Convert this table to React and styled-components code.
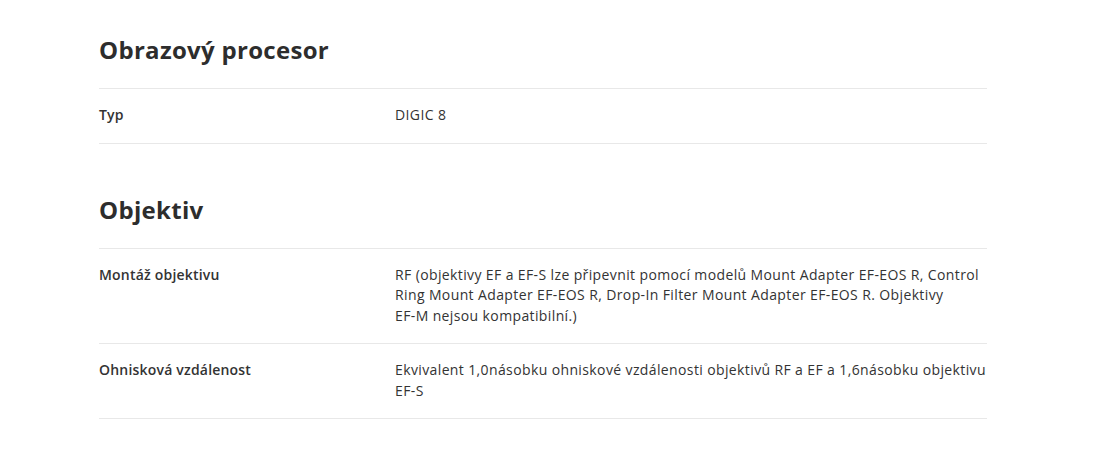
import styled, { createGlobalStyle } from "styled-components";

const Global = createGlobalStyle`
  body {
    margin: 0;
    background: #ffffff;
    font-family: "Open Sans", "Liberation Sans", sans-serif;
    color: #333333;
  }
`;

const Page = styled.div`
  width: 888px;
  margin-left: 99px;
  padding-top: 35px;
`;

const Section = styled.section`
  margin-bottom: 51px;
`;

const Heading = styled.h2`
  margin: 0 0 23px 0;
  font-size: 24px;
  line-height: 30px;
  font-weight: 700;
  letter-spacing: 0.3px;
  color: #2d2d2d;
`;

const Table = styled.div`
  border-top: 1px solid #e8e8e8;
`;

const Row = styled.div`
  display: grid;
  grid-template-columns: 296px 1fr;
  padding: 16px 0 17px;
  border-bottom: 1px solid #e8e8e8;
  font-size: 14px;
  line-height: 20.5px;
`;

const Label = styled.div`
  font-weight: 600;
  letter-spacing: 0.2px;
  color: #333333;
`;

const Value = styled.div`
  font-weight: 400;
  letter-spacing: 0.38px;
  color: #333333;
`;

const Line = styled.span`
  display: block;
  white-space: nowrap;
`;

// lines kept as in the source page
const sections = [
  {
    title: "Obrazový procesor",
    rows: [["Typ", ["DIGIC 8"]]],
  },
  {
    title: "Objektiv",
    rows: [
      [
        "Montáž objektivu",
        [
          "RF (objektivy EF a EF-S lze připevnit pomocí modelů Mount Adapter EF-EOS R, Control",
          "Ring Mount Adapter EF-EOS R, Drop-In Filter Mount Adapter EF-EOS R. Objektivy",
          "EF-M nejsou kompatibilní.)",
        ],
      ],
      [
        "Ohnisková vzdálenost",
        [
          "Ekvivalent 1,0násobku ohniskové vzdálenosti objektivů RF a EF a 1,6násobku objektivu",
          "EF-S",
        ],
      ],
    ],
  },
];

export default function App() {
  return (
    <Page>
      <Global />
      {sections.map((s) => (
        <Section key={s.title}>
          <Heading>{s.title}</Heading>
          <Table>
            {s.rows.map(([k, lines]) => (
              <Row key={k}>
                <Label>{k}</Label>
                <Value>
                  {lines.map((l, i) => (
                    <Line key={i}>{l}</Line>
                  ))}
                </Value>
              </Row>
            ))}
          </Table>
        </Section>
      ))}
    </Page>
  );
}
